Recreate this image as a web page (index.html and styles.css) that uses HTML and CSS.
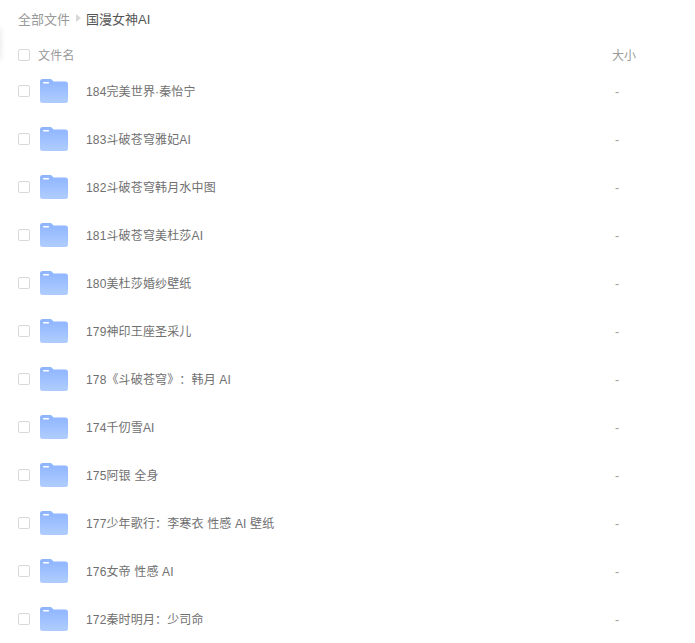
FILE: index.html
```html
<!DOCTYPE html>
<html lang="zh-CN">
<head>
    <meta charset="UTF-8">
    <title>国漫女神AI</title>
    <link rel="stylesheet" href="styles.css">
</head>
<body>
    <div class="edge-shadow"></div>

    <div class="crumbs">
        <span class="crumb-root">全部文件</span>
        <span class="crumb-arrow"></span>
        <span class="crumb-current">国漫女神AI</span>
    </div>

    <div class="list-head">
        <span class="check"></span>
        <span class="head-name">文件名</span>
        <span class="head-size">大小</span>
    </div>

    <div class="file-list" id="fileList">
        <div class="file-row">
            <span class="check"></span>
            <svg class="folder" viewBox="0 0 28 24"><use href="#folderIcon"/></svg>
            <span class="file-name">184完美世界·秦怡宁</span>
            <span class="file-size">-</span>
        </div>
        <div class="file-row">
            <span class="check"></span>
            <svg class="folder" viewBox="0 0 28 24"><use href="#folderIcon"/></svg>
            <span class="file-name">183斗破苍穹雅妃AI</span>
            <span class="file-size">-</span>
        </div>
        <div class="file-row">
            <span class="check"></span>
            <svg class="folder" viewBox="0 0 28 24"><use href="#folderIcon"/></svg>
            <span class="file-name">182斗破苍穹韩月水中图</span>
            <span class="file-size">-</span>
        </div>
        <div class="file-row">
            <span class="check"></span>
            <svg class="folder" viewBox="0 0 28 24"><use href="#folderIcon"/></svg>
            <span class="file-name">181斗破苍穹美杜莎AI</span>
            <span class="file-size">-</span>
        </div>
        <div class="file-row">
            <span class="check"></span>
            <svg class="folder" viewBox="0 0 28 24"><use href="#folderIcon"/></svg>
            <span class="file-name">180美杜莎婚纱壁纸</span>
            <span class="file-size">-</span>
        </div>
        <div class="file-row">
            <span class="check"></span>
            <svg class="folder" viewBox="0 0 28 24"><use href="#folderIcon"/></svg>
            <span class="file-name">179神印王座圣采儿</span>
            <span class="file-size">-</span>
        </div>
        <div class="file-row">
            <span class="check"></span>
            <svg class="folder" viewBox="0 0 28 24"><use href="#folderIcon"/></svg>
            <span class="file-name">178《斗破苍穹》：韩月 AI</span>
            <span class="file-size">-</span>
        </div>
        <div class="file-row">
            <span class="check"></span>
            <svg class="folder" viewBox="0 0 28 24"><use href="#folderIcon"/></svg>
            <span class="file-name">174千仞雪AI</span>
            <span class="file-size">-</span>
        </div>
        <div class="file-row">
            <span class="check"></span>
            <svg class="folder" viewBox="0 0 28 24"><use href="#folderIcon"/></svg>
            <span class="file-name">175阿银 全身</span>
            <span class="file-size">-</span>
        </div>
        <div class="file-row">
            <span class="check"></span>
            <svg class="folder" viewBox="0 0 28 24"><use href="#folderIcon"/></svg>
            <span class="file-name">177少年歌行：李寒衣 性感 AI 壁纸</span>
            <span class="file-size">-</span>
        </div>
        <div class="file-row">
            <span class="check"></span>
            <svg class="folder" viewBox="0 0 28 24"><use href="#folderIcon"/></svg>
            <span class="file-name">176女帝 性感 AI</span>
            <span class="file-size">-</span>
        </div>
        <div class="file-row">
            <span class="check"></span>
            <svg class="folder" viewBox="0 0 28 24"><use href="#folderIcon"/></svg>
            <span class="file-name">172秦时明月：少司命</span>
            <span class="file-size">-</span>
        </div>
    </div>

    <!-- shared folder shape -->
    <svg class="defs" width="0" height="0">
        <defs>
            <linearGradient id="folderFill" x1="0" y1="0" x2="0" y2="1">
                <stop offset="0" stop-color="#8db4fe"/>
                <stop offset="1" stop-color="#b0cdff"/>
            </linearGradient>
            <g id="folderIcon">
                <path fill="url(#folderFill)" d="M2.500 0H10c1 0 1.600.5 2.300 1.300L13.500 2.500H25.500A2.500 2.500 0 0 1 28 5V21.500A2.500 2.500 0 0 1 25.500 24H2.500A2.500 2.500 0 0 1 0 21.500V2.500A2.500 2.500 0 0 1 2.500 0Z"/>
                <rect x="3" y="3" width="6" height="1.500" rx=".5" fill="#fff"/>
            </g>
        </defs>
    </svg>
</body>
</html>
```

FILE: styles.css
```css
html, body {
    height: 643px;
    overflow: hidden;
}

body {
    margin: 0;
    position: relative;
    background: #fff;
    font-family: "Liberation Sans", "Noto Sans CJK SC", sans-serif;
    color: #666;
    text-spacing-trim: space-all;
}

.edge-shadow {
    position: absolute;
    left: -6px;
    top: 28px;
    width: 6px;
    height: 32px;
    border-radius: 3px;
    box-shadow: 0 0 6px rgba(0, 0, 0, 0.12);
}

.crumbs {
    display: flex;
    align-items: center;
    height: 36px;
    padding-left: 18px;
    font-size: 13px;
}

.crumb-root {
    color: #999;
}

.crumb-arrow {
    width: 0;
    height: 0;
    margin: 0 5px 0 6px;
    border-left: 5px solid #d8d8d8;
    border-top: 4px solid transparent;
    border-bottom: 4px solid transparent;
}

.crumb-current {
    color: #555;
}

.list-head {
    display: flex;
    align-items: center;
    box-sizing: border-box;
    height: 31px;
    padding: 7px 0 0 18px;
    font-size: 12px;
    color: #999;
}

.head-name {
    margin-left: 8px;
    padding-bottom: 2px;
    letter-spacing: 0.3px;
}

.head-size {
    margin-left: auto;
    margin-right: 59px;
    padding-bottom: 2px;
}

.check {
    box-sizing: border-box;
    flex: none;
    width: 12px;
    height: 12px;
    border: 1px solid #d9d9d9;
    border-radius: 2px;
    background: #fff;
}

.file-row {
    display: flex;
    align-items: center;
    height: 48px;
    padding-left: 18px;
    font-size: 12px;
}

.folder {
    flex: none;
    width: 28px;
    height: 24px;
    margin-left: 10px;
}

.file-name {
    margin-left: 18px;
    padding-bottom: 2px;
    letter-spacing: 0.15px;
    color: #707070;
}

.file-size {
    margin-left: auto;
    margin-right: 76px;
    padding-top: 1px;
    color: #999;
}

.defs {
    position: absolute;
}
```
